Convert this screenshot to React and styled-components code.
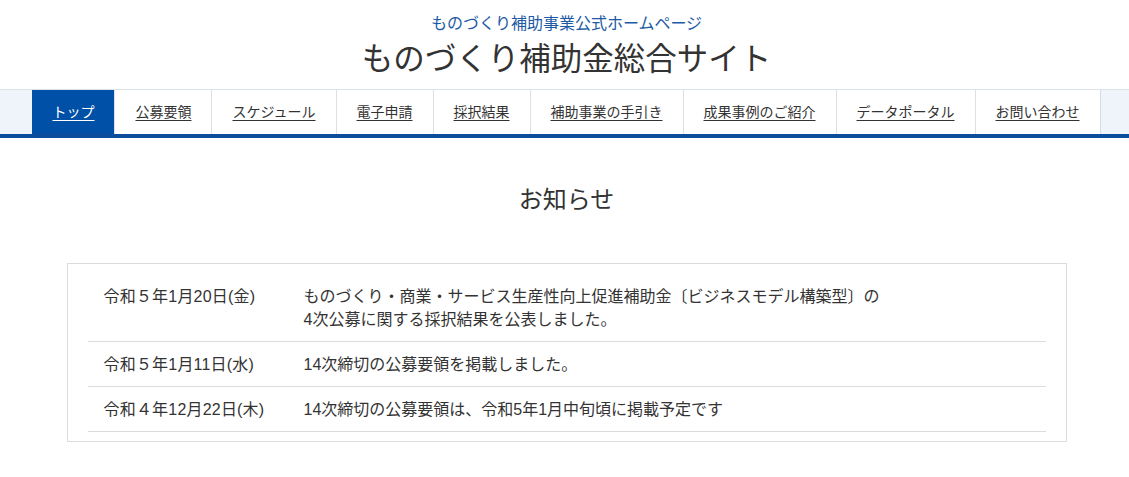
import styled, {createGlobalStyle} from "styled-components"

const GlobalStyle = createGlobalStyle`
    body {
        margin: 0;
        background: #fff;
        color: #333;
        font-family: "Liberation Sans", "Noto Sans CJK JP", sans-serif;
    }
`

const Header = styled.header`
    text-align: center;
    padding: 14px 0 10px 4px;
`

const SubTitle = styled.p`
    margin: 0;
    font-size: 16px;
    line-height: 20px;
    color: #1d5aa6;
`

const SiteTitle = styled.h1`
    margin: 5px 0 0;
    font-size: 31.5px;
    line-height: 40px;
    font-weight: 400;
    color: #333;
`

const NavStrip = styled.nav`
    background: #eef4fa;
    border-top: 1px solid #dde3ea;
    border-bottom: 4px solid #0b4d9c;
`

const NavList = styled.ul`
    list-style: none;
    margin: 0;
    padding: 0 0 0 4px;
    display: flex;
    justify-content: center;
`

const NavItem = styled.li`
    background: ${p => (p.$active ? "#0050a8" : "#fff")};
    border-right: 1px solid #dcdfe3;

    &:last-child {
        border-right: 1px solid #d4dde8;
    }

    a {
        display: block;
        padding: 0 20px;
        height: 44px;
        line-height: 44px;
        font-size: 14px;
        color: ${p => (p.$active ? "#fff" : "#333")};
        text-decoration: underline;
        text-underline-offset: 3px;
    }
`

const Main = styled.main`
    padding-left: 4px;
`

const SectionTitle = styled.h2`
    margin: 46px 0 47px;
    text-align: center;
    font-size: 24px;
    line-height: 32px;
    font-weight: 400;
    color: #333;
`

const NewsBox = styled.div`
    box-sizing: border-box;
    width: 1000px;
    margin: 0 auto;
    border: 1px solid #dcdcdc;
    padding: 10px 20px 9px;
`

const NewsRow = styled.div`
    display: grid;
    grid-template-columns: 200px 1fr;
    padding: 11px 16px 10px;
    border-bottom: 1px solid #dcdcdc;
    font-size: 16px;
    line-height: 23px;
    color: #333;
`

const NewsDate = styled.span`
    letter-spacing: 0.2px;
`

const NewsText = styled.span``

const menu = [
    "トップ",
    "公募要領",
    "スケジュール",
    "電子申請",
    "採択結果",
    "補助事業の手引き",
    "成果事例のご紹介",
    "データポータル",
    "お問い合わせ",
]

const news = [
    {
        date: "令和５年1月20日(金)",
        lines: [
            "ものづくり・商業・サービス生産性向上促進補助金〔ビジネスモデル構築型〕の",
            "4次公募に関する採択結果を公表しました。",
        ],
    },
    {date: "令和５年1月11日(水)", lines: ["14次締切の公募要領を掲載しました。"]},
    {date: "令和４年12月22日(木)", lines: ["14次締切の公募要領は、令和5年1月中旬頃に掲載予定です"]},
]

export default function App() {
    return (
        <>
            <GlobalStyle />
            <Header>
                <SubTitle>ものづくり補助事業公式ホームページ</SubTitle>
                <SiteTitle>ものづくり補助金総合サイト</SiteTitle>
            </Header>
            <NavStrip>
                <NavList>
                    {menu.map((label, i) => (
                        <NavItem key={label} $active={i === 0}>
                            <a href="#">{label}</a>
                        </NavItem>
                    ))}
                </NavList>
            </NavStrip>
            <Main>
                <SectionTitle>お知らせ</SectionTitle>
                <NewsBox>
                    {news.map(item => (
                        <NewsRow key={item.date}>
                            <NewsDate>{item.date}</NewsDate>
                            <NewsText>
                                {item.lines.map((line, i) => (
                                    <span key={i}>
                                        {line}
                                        {i < item.lines.length - 1 && <br />}
                                    </span>
                                ))}
                            </NewsText>
                        </NewsRow>
                    ))}
                </NewsBox>
            </Main>
        </>
    )
}
